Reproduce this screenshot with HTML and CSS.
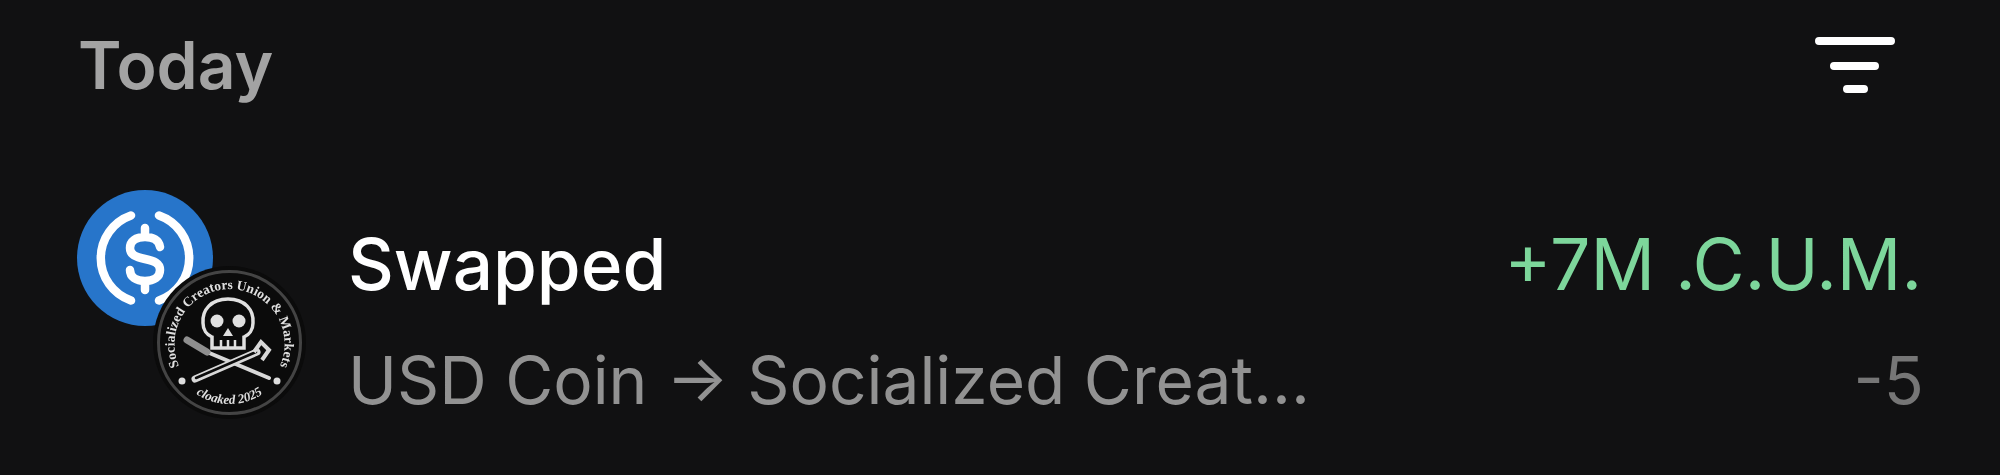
FILE: index.html
```html
<!DOCTYPE html>
<html lang="en">
<head>
<meta charset="utf-8">
<title>Activity</title>
<link rel="stylesheet" href="styles.css">
</head>
<body>
<main class="feed">
  <header class="feed-head">
    <h2 class="feed-title">Today</h2>
    <svg class="filter-icon" viewBox="0 0 80 56" aria-hidden="true">
      <path d="M4 4H76M19 29H60M32 52H49" fill="none" stroke="#fff" stroke-width="8" stroke-linecap="round"/>
    </svg>
  </header>
  <section class="tx">
    <div class="tokens">
      <svg class="token-main" viewBox="0 0 136 136" aria-hidden="true">
        <circle cx="68" cy="68" r="68" fill="#2775ca"/>
        <path d="M54 25.5A45 45 0 0 0 54 110.5M82 25.5A45 45 0 0 1 82 110.5" fill="none" stroke="#fff" stroke-width="8.5" stroke-linecap="round"/>
        <path d="M83 57C82 50 76 47 68 47C59 47 53 51 53 58C53 65 59 67 68 69C77 71 83 73 83 80C83 87 77 91 68 91C59 91 53 87 53 80M68 38V47M68 91V100" fill="none" stroke="#fff" stroke-width="8.5" stroke-linecap="round"/>
      </svg>
      <svg class="token-badge" viewBox="-4 -4 153 153" aria-hidden="true">
        <defs>
          <path id="arc-top" d="M24 100A55 55 0 1 1 121 100"/>
          <path id="arc-bot" d="M24 110A61 61 0 0 0 121 110"/>
        </defs>
        <circle cx="72.5" cy="72.5" r="76.5" fill="#0b0b0b"/>
        <circle cx="72.5" cy="72.5" r="71" fill="#0b0b0b" stroke="#444" stroke-width="3"/>
        <text class="badge-text"><textPath href="#arc-top" startOffset="50%" text-anchor="middle">Socialized Creators Union &amp; Markets</textPath></text>
        <text class="badge-text small"><textPath href="#arc-bot" startOffset="50%" text-anchor="middle">cloaked 2025</textPath></text>
        <circle cx="25" cy="111" r="3.5" fill="#ddd"/>
        <circle cx="120" cy="111" r="3.5" fill="#ddd"/>
        <path d="M71 29C54 29 45 40 46 53C46 60 50 65 55 67V78H87V67C92 65 96 60 96 53C97 40 88 29 71 29Z" fill="#0b0b0b" stroke="#e0e0e0" stroke-width="3.5"/>
        <circle cx="60" cy="51" r="6.5" fill="#e0e0e0"/>
        <circle cx="82" cy="51" r="6.5" fill="#e0e0e0"/>
        <path d="M71 58L66 66H76Z" fill="#e0e0e0"/>
        <path d="M64 70V78M71 70V78M78 70V78" stroke="#e0e0e0" stroke-width="2.5"/>
        <path d="M50 82L112 108" stroke="#d8d8d8" stroke-width="4" stroke-linecap="round"/>
        <path d="M30 70L50 82" stroke="#8f8f8f" stroke-width="7" stroke-linecap="round"/>
        <path d="M38 109L100 82" stroke="#d8d8d8" stroke-width="7" stroke-linecap="round"/>
        <path d="M39 108L99 82" stroke="#0b0b0b" stroke-width="2.5" stroke-linecap="round"/>
        <path d="M97 82L104 72L112 80L105 90" fill="none" stroke="#d8d8d8" stroke-width="4"/>
      </svg>
    </div>
    <div class="tx-body">
      <div class="tx-row">
        <span class="tx-name">Swapped</span>
        <span class="tx-gain">+7M .C.U.M.</span>
      </div>
      <div class="tx-row">
        <span class="tx-desc">USD Coin → Socialized Creat...</span>
        <span class="tx-loss">-5</span>
      </div>
    </div>
  </section>
</main>
</body>
</html>
```
FILE: styles.css
```css
* {
  box-sizing: border-box;
}

html,
body {
  margin: 0;
  height: 100%;
  background: #111112;
}

body {
  overflow: hidden;
  font-family: Inter, "Noto Sans", sans-serif;
}

.feed {
  padding: 37px 78px 0 77px;
}

.feed-head {
  display: flex;
  justify-content: space-between;
  align-items: flex-start;
  height: 153px;
  padding-right: 27px;
}

.feed-title {
  margin: -13px 0 0 1px;
  font-size: 66px;
  line-height: 82px;
  font-weight: 600;
  color: #a3a3a3;
}

.filter-icon {
  display: block;
  width: 80px;
  height: 56px;
}

.tx {
  display: flex;
  align-items: flex-start;
}

.tokens {
  position: relative;
  flex: none;
  width: 271px;
  height: 225px;
}

.token-main {
  display: block;
  width: 136px;
  height: 136px;
  filter: blur(0.5px);
}

.token-badge {
  position: absolute;
  left: 76px;
  top: 76px;
  width: 153px;
  height: 153px;
  overflow: visible;
  filter: blur(0.6px);
}

.badge-text {
  font-family: "Liberation Serif", serif;
  font-size: 13.5px;
  font-weight: 700;
  fill: #e0e0e0;
}

.badge-text.small {
  font-size: 13px;
  font-style: italic;
}

.tx-body {
  flex: 1;
  min-width: 0;
  display: flex;
  flex-direction: column;
  gap: 38px;
  padding-top: 35px;
}

.tx-row {
  display: flex;
  justify-content: space-between;
  align-items: baseline;
}

.tx-name {
  font-size: 71px;
  line-height: 78px;
  font-weight: 500;
  color: #fff;
}

.tx-gain {
  font-size: 71.5px;
  line-height: 78px;
  color: #7dd69b;
}

.tx-desc {
  font-size: 65.8px;
  line-height: 78px;
  color: #929292;
}

.tx-loss {
  margin-right: -2px;
  font-size: 66px;
  line-height: 78px;
  color: #767676;
}
```
